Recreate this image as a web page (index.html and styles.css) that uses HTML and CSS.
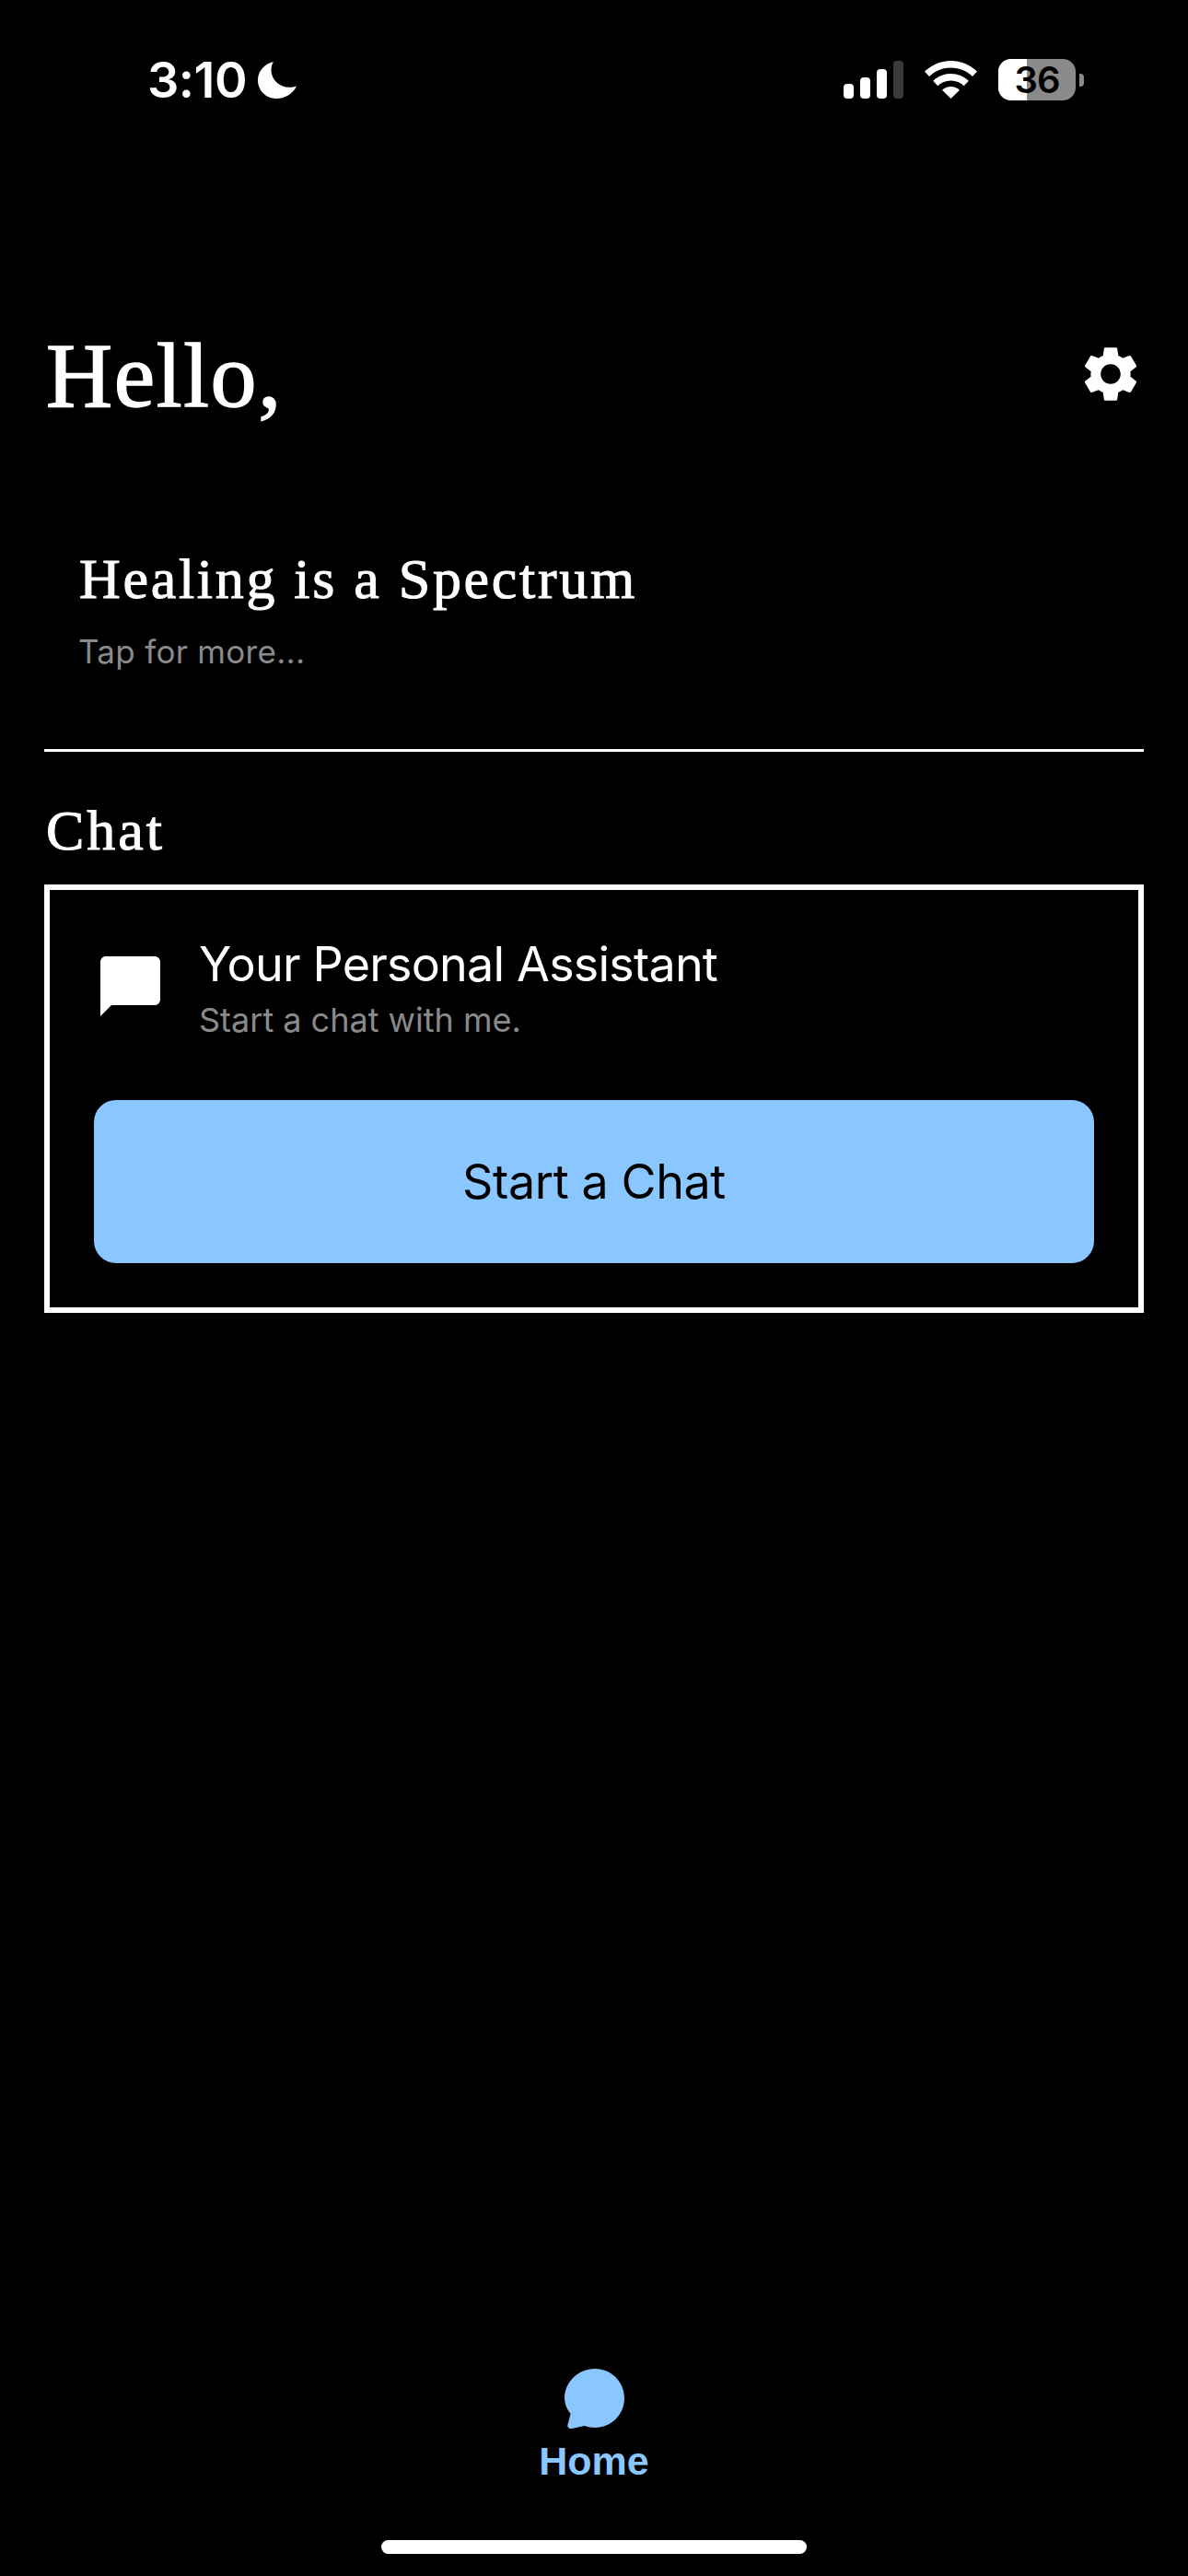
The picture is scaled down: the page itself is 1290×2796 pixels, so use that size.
FILE: index.html
```html
<!DOCTYPE html>
<html lang="en">
<head>
  <meta charset="UTF-8">
  <meta name="viewport" content="width=device-width, initial-scale=1.0">
  <title>Home</title>
  <link rel="stylesheet" href="styles.css">
</head>
<body>
  <div class="status-bar">
    <div class="status-left">
      <span class="time">3:10</span>
      <svg class="moon" viewBox="0 0 42 40" width="42" height="40"><path d="M17 0C6.500 2.500 0 10.500 0 20c0 11.500 9 20 20.500 20C30 40 38 34.500 42 26.500c-2.500 1-5 1.300-7.500 1.300C23 27.800 14.500 19.500 14.500 9c0-3.300.8-6.200 2.500-9z"/></svg>
    </div>
    <div class="status-right">
      <div class="signal">
        <span class="bar bar-1"></span>
        <span class="bar bar-2"></span>
        <span class="bar bar-3"></span>
        <span class="bar bar-4"></span>
      </div>
      <svg class="wifi" viewBox="0 0 57 41" width="57" height="41"><path d="M28.500 0C17.500 0 7.500 4.300 0 11.500l5 5.500C11.200 11 19.500 7.500 28.500 7.500S45.800 11 52 17l5-5.500C49.500 4.300 39.500 0 28.500 0z"/><path d="M28.500 14c-7.400 0-14.200 2.900-19.300 7.700l5.100 5.500c3.700-3.500 8.700-5.600 14.200-5.600s10.500 2.100 14.200 5.600l5.100-5.500C42.700 16.900 35.900 14 28.500 14z"/><path d="M28.500 28c-3.700 0-7 1.400-9.500 3.800L28.500 41 38 31.800c-2.500-2.400-5.800-3.800-9.500-3.800z"/></svg>
      <div class="battery">
        <div class="battery-body">
          <span class="battery-fill"></span>
          <span class="battery-level">36</span>
        </div>
        <span class="battery-nub"></span>
      </div>
    </div>
  </div>

  <main class="content">
    <header class="greeting">
      <h1>Hello,</h1>
      <svg class="gear" viewBox="0 0 24 24" width="72" height="72"><path d="M19.140 12.940c.04-.3.06-.61.06-.94 0-.32-.02-.64-.07-.94l2.030-1.580c.18-.14.23-.41.12-.61l-1.920-3.320c-.12-.22-.37-.29-.59-.22l-2.390.96c-.5-.38-1.030-.7-1.620-.94l-.36-2.540c-.04-.24-.24-.41-.48-.41h-3.840c-.24 0-.43.17-.47.41l-.36 2.540c-.59.24-1.130.57-1.620.94l-2.390-.96c-.22-.08-.47 0-.59.22L2.740 8.870c-.12.21-.08.47.12.61l2.030 1.580c-.05.3-.09.63-.09.94s.02.64.07.94l-2.030 1.580c-.18.14-.23.41-.12.61l1.920 3.320c.12.22.37.29.59.22l2.390-.96c.5.38 1.030.7 1.620.94l.36 2.540c.05.24.24.41.48.41h3.840c.24 0 .44-.17.47-.41l.36-2.540c.59-.24 1.130-.56 1.620-.94l2.390.96c.22.08.47 0 .59-.22l1.920-3.320c.12-.22.07-.47-.12-.61l-2.010-1.580zM12 15.600c-1.980 0-3.600-1.620-3.600-3.600s1.620-3.600 3.600-3.600 3.600 1.620 3.600 3.600-1.620 3.600-3.600 3.600z"/></svg>
    </header>

    <section class="article">
      <h2>Healing is a Spectrum</h2>
      <p>Tap for more...</p>
    </section>

    <section class="chat">
      <h3>Chat</h3>
      <div class="chat-card">
        <div class="chat-info">
          <svg class="chat-icon" viewBox="0 0 65 65" width="65" height="65"><path d="M6 0h53c3.300 0 6 2.700 6 6v41c0 3.300-2.700 6-6 6H12L0 65V6c0-3.300 2.700-6 6-6z"/></svg>
          <div class="chat-text">
            <div class="chat-title">Your Personal Assistant</div>
            <div class="chat-sub">Start a chat with me.</div>
          </div>
        </div>
        <button class="chat-button">Start a Chat</button>
      </div>
    </section>
  </main>

  <nav class="tab-bar">
    <div class="tab">
      <svg class="tab-icon" viewBox="0 0 65 65" width="65" height="65"><path d="M33 0c17.700 0 32 14.300 32 32S50.700 64 33 64c-4 0-7.800-.7-11.300-2L8 65c-3 .7-5.200-1.500-4.600-4.300L6.600 49C2.500 44 0 38.300 0 32 0 14.300 15.300 0 33 0z"/></svg>
      <span class="tab-label">Home</span>
    </div>
    <div class="home-indicator"></div>
  </nav>
</body>
</html>
```

FILE: styles.css
```css
* {
  box-sizing: border-box;
}
body {
  margin: 0;
  width: 1290px;
  height: 2796px;
  background-color: #000;
  color: #fff;
  font-family: Inter, "Liberation Sans", sans-serif;
  display: flex;
  flex-direction: column;
  overflow: hidden;
}

/* status bar */
.status-bar {
  display: flex;
  justify-content: space-between;
  align-items: flex-start;
  padding: 64px 113px 0 160px;
  height: 180px;
}
.status-left {
  display: flex;
  align-items: center;
  gap: 12px;
}
.time {
  font-size: 54px;
  font-weight: 600;
  line-height: 46px;
  letter-spacing: -0.5px;
}
.moon {
  fill: #fff;
}
.status-right {
  display: flex;
  align-items: center;
  gap: 23px;
}
.signal {
  display: flex;
  align-items: flex-end;
  gap: 7px;
  height: 41px;
}
.bar {
  width: 11px;
  background-color: #fff;
  border-radius: 4px;
}
.bar-1 {
  height: 16px;
}
.bar-2 {
  height: 23px;
}
.bar-3 {
  height: 32px;
}
.bar-4 {
  height: 41px;
  background-color: #3a3a3a;
}
.wifi {
  fill: #fff;
}
.battery {
  display: flex;
  align-items: center;
  gap: 4px;
}
.battery-body {
  position: relative;
  width: 84px;
  height: 45px;
  border-radius: 14px;
  background-color: #8a8a8a;
  display: flex;
  align-items: center;
  justify-content: center;
}
.battery-fill {
  position: absolute;
  left: 0;
  top: 0;
  bottom: 0;
  width: 31px;
  background-color: #fff;
  border-radius: 14px 0 0 14px;
}
.battery-level {
  position: relative;
  color: #000;
  font-size: 40px;
  font-weight: 600;
  line-height: 40px;
  letter-spacing: -1px;
}
.battery-nub {
  width: 5px;
  height: 14px;
  background-color: #8a8a8a;
  border-radius: 0 4px 4px 0;
}

/* main */
.content {
  flex: 1;
  padding: 0 48px;
}
.greeting {
  display: flex;
  justify-content: space-between;
  align-items: center;
  height: 120px;
  margin-top: 168px;
}
.greeting h1 {
  margin: 0 0 0 2px;
  font-family: "Liberation Serif", serif;
  font-size: 100px;
  font-weight: 400;
  line-height: 120px;
  letter-spacing: 1.6px;
  -webkit-text-stroke: 1.5px #fff;
}
.gear {
  fill: #fff;
  margin-bottom: 4px;
}
.article {
  padding-left: 38px;
  margin-top: 122px;
  height: 226px;
  border-bottom: 3px solid #fff;
}
.article h2 {
  margin: 0;
  font-family: "Liberation Serif", serif;
  font-size: 62px;
  font-weight: 400;
  line-height: 76px;
  letter-spacing: 2.7px;
  -webkit-text-stroke: 1px #fff;
}
.article p {
  margin: 18px 0 0 -1px;
  font-size: 35px;
  color: #8a8a8a;
  line-height: 46px;
  letter-spacing: 0.3px;
}
.chat h3 {
  margin: 0;
  padding: 50px 0 0 2px;
  font-family: "Liberation Serif", serif;
  font-size: 62px;
  font-weight: 400;
  line-height: 70px;
  letter-spacing: 3px;
  -webkit-text-stroke: 1px #fff;
}
.chat-card {
  margin-top: 24px;
  border: 6px solid #fff;
  height: 465px;
  padding: 51px 48px 0;
}
.chat-info {
  display: flex;
  align-items: center;
  gap: 42px;
  padding-left: 7px;
}
.chat-icon {
  fill: #fff;
  margin-bottom: 6px;
}
.chat-title {
  font-size: 52px;
  line-height: 60px;
  letter-spacing: -0.78px;
}
.chat-sub {
  margin-top: 7px;
  font-size: 36px;
  line-height: 46px;
  color: #8a8a8a;
}
.chat-button {
  display: block;
  width: 100%;
  height: 177px;
  margin-top: 64px;
  border: none;
  border-radius: 24px;
  background-color: #8ac6ff;
  color: #000;
  font-family: Inter, "Liberation Sans", sans-serif;
  font-size: 52px;
  letter-spacing: -0.4px;
}

/* bottom tabs */
.tab-bar {
  display: flex;
  flex-direction: column;
  align-items: center;
  padding-bottom: 24px;
}
.tab {
  display: flex;
  flex-direction: column;
  align-items: center;
}
.tab-icon {
  fill: #8ac6ff;
}
.tab-label {
  margin-top: 12px;
  font-family: "Liberation Sans", sans-serif;
  font-size: 43px;
  font-weight: 700;
  line-height: 46px;
  color: #8ac6ff;
}
.home-indicator {
  width: 462px;
  height: 15px;
  margin-top: 63px;
  background-color: #fff;
  border-radius: 8px;
}
```
